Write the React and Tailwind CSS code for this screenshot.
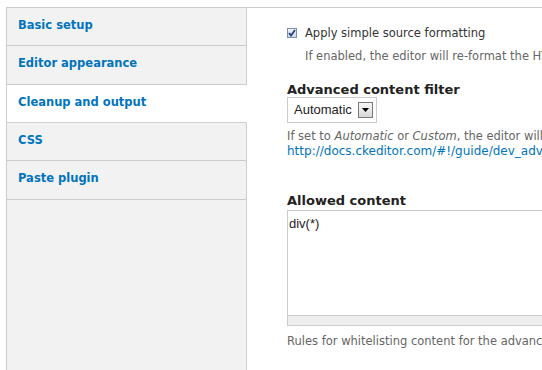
export default function App() {
  const tabs = [
    { label: "Basic setup", h: "h-[37px]" },
    { label: "Editor appearance", h: "h-[38px]" },
    { label: "Cleanup and output", h: "h-[37px]", active: true },
    { label: "CSS", h: "h-[37px]" },
    { label: "Paste plugin", h: "h-[38px]" },
  ];
  return (
    <div
      className="w-[542px] h-[370px] overflow-hidden bg-white text-[#333]"
      style={{ fontFamily: '"DejaVu Sans", Verdana, sans-serif' }}
    >
      <div className="ml-[6px] mt-[7px] flex h-[363px] border-t border-[#cccccc]">
        <div className="flex w-[241px] shrink-0 flex-col border-l border-[#cccccc] bg-[#f2f2f2]">
          {tabs.map((t) => (
            <div
              key={t.label}
              className={
                t.active
                  ? `${t.h} box-content border-b border-r border-b-[#cccccc] border-r-transparent bg-white pl-[11px] pt-0`
                  : `${t.h} box-content border-b border-r border-[#cccccc] pl-[11px]`
              }
            >
              <div className="pt-[10px] text-[11.5px] font-bold leading-[14px] text-[#0074bd] whitespace-nowrap">
                {t.label}
              </div>
            </div>
          ))}
          <div className="flex-1 border-r border-[#cccccc]" />
        </div>

        <div className="min-w-0 flex-1 overflow-hidden pl-[40px] text-[11.5px] whitespace-nowrap">
          <div className="mt-[17px] flex h-[16px] items-center leading-[16px]">
            <span className="flex h-[10px] w-[10px] shrink-0 items-center justify-center border border-[#7b8fa6] bg-gradient-to-b from-[#eef2f7] to-[#cfd8e3]">
              <svg width="8" height="8" viewBox="0 0 8 8">
                <path d="M1 4 L3 6.5 L7 1" fill="none" stroke="#1f3f8a" strokeWidth="1.8" />
              </svg>
            </span>
            <span className="ml-[8px] text-[#333]">Apply simple source formatting</span>
          </div>
          <div className="mt-[7px] pl-[18px] leading-[16px] text-[#666]">
            If enabled, the editor will re-format the HTML source code.
          </div>

          <div className="mt-[19px] text-[13px] font-bold leading-[14px] text-[#222]">
            Advanced content filter
          </div>
          <div
            className="flex h-[26px] w-[90px] items-center justify-between border border-[#cccccc] bg-white pl-[6px] pr-[3px] text-[13px] text-[#222]"
            style={{ fontFamily: '"Liberation Sans", Arial, sans-serif' }}
          >
            <span>Automatic</span>
            <span className="flex h-[16px] w-[15px] items-center justify-center border border-[#7a7a7a] bg-gradient-to-b from-[#f7f7f7] to-[#d8d8d8]">
              <svg width="7" height="4" viewBox="0 0 7 4">
                <path d="M0 0 H7 L3.5 4 Z" fill="#000" />
              </svg>
            </span>
          </div>
          <div className="mt-[6px] leading-[15px] text-[#666]">
            If set to <em>Automatic</em> or <em>Custom</em>, the editor will enforce rules.
          </div>
          <div className="text-[12px] leading-[15px] text-[#0074bd]">
            http://docs.ckeditor.com/#!/guide/dev_advanced_content_filter
          </div>

          <div className="mt-[35px] text-[13px] font-bold leading-[14px] text-[#222]">
            Allowed content
          </div>
          <div className="mt-[2px] w-[400px]">
            <div
              className="h-[106px] border border-[#cccccc] bg-white pl-[1px] pt-[5px] text-[13px] leading-[16px] text-[#222]"
              style={{ fontFamily: '"Liberation Sans", Arial, sans-serif' }}
            >
              div(*)
            </div>
            <div className="h-[10px] border-x border-b border-[#cccccc] bg-[#eeeeee]" />
          </div>
          <div className="mt-[8px] leading-[15px] text-[#666]">
            Rules for whitelisting content for the advanced content filter.
          </div>
        </div>
      </div>
    </div>
  );
}
